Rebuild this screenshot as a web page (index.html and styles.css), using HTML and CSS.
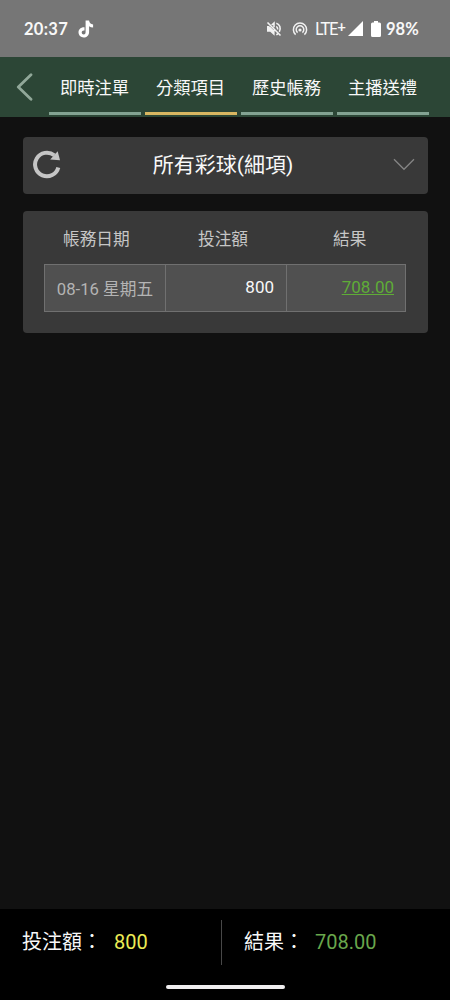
FILE: index.html
```
<!DOCTYPE html>
<html lang="zh-Hant">
<head>
<meta charset="utf-8">
<meta name="viewport" content="width=device-width, initial-scale=1">
<title>分類項目</title>
<link rel="stylesheet" href="styles.css">
</head>
<body>
<div class="screen">
  <div class="status">
    <span class="clock">20:37</span>
    <svg class="tiktok" width="16" height="18" viewBox="0 0 16 18"><path d="M7.600 0.500h3.500c.2 2.200 1.600 3.700 4 3.900v3.100c-1.500 0-2.900-.4-4-1.200v5.600c0 3.400-2.400 5.600-5.400 5.600C2.800 17.500.5 15.300.5 12.300c0-3.200 2.600-5.400 6-5.100v3.300c-1.600-.3-2.800.5-2.800 1.900 0 1.100.9 2 2 2 1.400 0 1.900-.9 1.900-2.500z" fill="#fff"/></svg>
    <svg class="muted" width="16" height="16" viewBox="0 0 16 16" fill="none" stroke="#f1f1f1" stroke-width="1.600"><path d="M1.500 1.500l13 13M3.500 5.700H1.800v4.300h2.700l3.300 3V9M5.700 4L8 2v4.300M10.300 5.300c1 .7 1.500 1.600 1.400 3.200M10.300 2.200c3.500 1 5 5 3 8.600M10.300 13.800l1.600-.8"/><path d="M2 6h2.500L7.500 9v3.500L4.800 10H2z" fill="#f1f1f1" stroke="none"/></svg>
    <svg class="hotspot" width="16" height="16" viewBox="0 0 16 16" fill="none" stroke="#f1f1f1" stroke-width="1.500"><path d="M3.600 13.600a6.600 6.600 0 1 1 8.800 0M5.600 11.600a3.800 3.800 0 1 1 4.800 0"/><circle cx="8" cy="9" r="1.600" fill="#f1f1f1" stroke="none"/></svg>
    <span class="lte">LTE<span class="plus">+</span></span>
    <svg class="signal" width="15" height="15" viewBox="0 0 15 15"><path d="M0 15L15 0v15z" fill="#fff"/></svg>
    <svg class="battery" width="10" height="16" viewBox="0 0 10 16"><path d="M3 0h4v1.500h1.500q1.500 0 1.500 1.500v11.500q0 1.500-1.500 1.500h-7Q0 16 0 14.500V3q0-1.500 1.500-1.500H3z" fill="#fff"/></svg>
    <span class="percent">98%</span>
  </div>

  <nav class="nav">
    <svg class="back" width="17" height="28" viewBox="0 0 17 28"><path d="M15 1.800L2.300 14 15 26.200" fill="none" stroke="#91a899" stroke-width="2.800" stroke-linecap="round" stroke-linejoin="round"/></svg>
    <a class="tab">即時注單</a>
    <a class="tab active">分類項目</a>
    <a class="tab">歷史帳務</a>
    <a class="tab">主播送禮</a>
  </nav>

  <main class="main">
    <div class="card picker">
      <svg class="refresh" width="30" height="30" viewBox="0 0 30 30"><path d="M26.300 18.400A11.800 11.800 0 1 1 22.300 6.300" fill="none" stroke="#c5c5c5" stroke-width="4"/><path d="M25.700 2.300L28 11.300l-9.800-.7z" fill="#c5c5c5"/></svg>
      <span class="picker-title">所有彩球(細項)</span>
      <svg class="chevron" width="22" height="13" viewBox="0 0 22 13"><path d="M1 1.300l10 10 10-10" fill="none" stroke="#858585" stroke-width="1.300"/></svg>
    </div>

    <div class="card report">
      <div class="head">
        <span>帳務日期</span><span>投注額</span><span>結果</span>
      </div>
      <div class="row">
        <span class="date">08-16 星期五</span>
        <span class="amount">800</span>
        <span class="amount"><a class="result">708.00</a></span>
      </div>
    </div>
  </main>

  <footer class="footer">
    <div class="totals">
      <div class="total"><span>投注額：</span><span class="bet">800</span></div>
      <div class="total second"><span>結果：</span><span class="win">708.00</span></div>
    </div>
    <div class="gesture"></div>
  </footer>
</div>
</body>
</html>
```
FILE: styles.css
```
* { box-sizing: border-box; }
body {
  margin: 0;
  background: #111;
  color: #f8f8f8;
  font-family: Roboto, "Noto Sans CJK TC", sans-serif;
}
svg { display: block; flex: none; }
.screen {
  width: 450px;
  height: 1000px;
  display: flex;
  flex-direction: column;
  overflow: hidden;
}
.status {
  height: 57px;
  flex: none;
  display: flex;
  align-items: center;
  padding: 0 0 0 24px;
  background: #767676;
  font-family: Lato, sans-serif;
  line-height: 20px;
  white-space: nowrap;
}
.clock {
  width: 54px;
  font-weight: 700;
  font-size: 16.500px;
  letter-spacing: 0.300px;
}
.muted { margin-left: 172px; }
.hotspot { margin-left: 10px; }
.lte {
  width: 32px;
  margin-left: 7px;
  font-size: 16.500px;
  letter-spacing: -1.300px;
  display: flex;
}
.plus { font-size: 15px; font-weight: 700; line-height: 15px; }
.signal { margin-left: 1px; }
.battery { margin-left: 8px; }
.percent {
  margin-left: 5px;
  font-weight: 700;
  font-size: 16.500px;
}
.nav {
  height: 60px;
  flex: none;
  display: flex;
  gap: 4px;
  padding: 0 21px 2px 16px;
  background: #2c4636;
}
.back { margin: 16px 12px 0 0; }
.tab {
  flex: 1;
  text-align: center;
  font-size: 17.300px;
  line-height: 62px;
  height: 58px;
  padding-right: 1px;
  border-bottom: 3px solid #83a292;
  white-space: nowrap;
}
.tab.active { border-color: #d8b661; }
.main {
  flex: 1;
  display: flex;
  flex-direction: column;
  gap: 17px;
  padding: 20px 22px 0 23px;
}
.card { background: #393939; border-radius: 4px; }
.picker {
  height: 57px;
  display: flex;
  align-items: center;
  padding: 0 13px 0 9px;
}
.refresh { margin-bottom: 4px; }
.picker-title {
  flex: 1;
  text-align: center;
  font-size: 21px;
  line-height: 30px;
  padding-bottom: 2px;
  margin-right: 9px;
}
.chevron { margin-bottom: 3px; }
.report { height: 122px; padding: 15px 22px 0 21px; }
.head {
  display: grid;
  grid-template-columns: repeat(3, 1fr);
  margin: 0 -7px 0 -11px;
  height: 38px;
  text-align: center;
  font-size: 16.700px;
  line-height: 27px;
  color: #c6c6c6;
}
.row {
  display: grid;
  grid-template-columns: 120px 121px 1fr;
  grid-template-rows: 46px;
  height: 48px;
  border: 1px solid #707070;
  background: #505050;
  font-size: 17px;
  line-height: 45px;
}
.row > span + span { border-left: 1px solid #707070; }
.date {
  text-align: center;
  color: #b4b4b4;
  font-size: 16.700px;
  line-height: 49px;
  white-space: nowrap;
}
.amount { padding-right: 12px; text-align: right; }
.amount:last-child { padding-right: 11px; }
.result {
  color: #5fac37;
  text-decoration: underline;
}
.footer {
  height: 91px;
  flex: none;
  padding: 11px 0 0;
  background: #000;
}
.totals {
  display: grid;
  grid-template-columns: 221px 1fr;
  height: 44px;
  font-size: 20px;
  line-height: 45px;
}
.total {
  display: flex;
  gap: 12px;
  padding-left: 22px;
  white-space: nowrap;
}
.second { border-left: 1px solid #484848; gap: 11px; }
.bet { color: #ecec55; }
.win { color: #69a74c; }
.gesture {
  width: 119px;
  height: 4px;
  margin: 21px 0 0 166px;
  border-radius: 2px;
  background: #f0eef0;
}
```
